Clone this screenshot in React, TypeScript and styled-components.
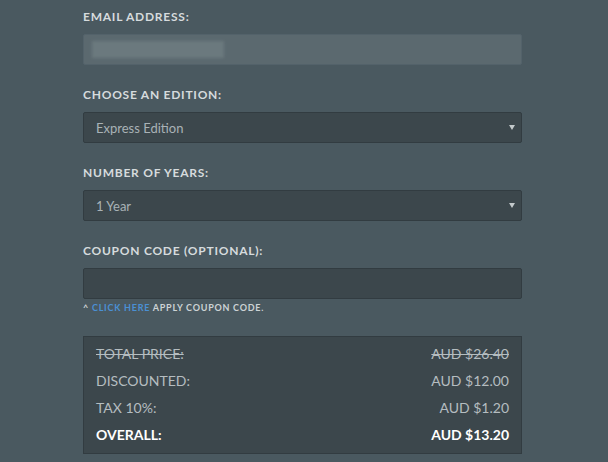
import React from "react";
import styled, { createGlobalStyle } from "styled-components";

const Global = createGlobalStyle`
  html, body { margin: 0; padding: 0; }
  body {
    background: #4a5960;
    font-family: Lato, "Open Sans", sans-serif;
    width: 608px;
    height: 462px;
    overflow: hidden;
  }
`;

const Form = styled.div`
  display: flex;
  flex-direction: column;
  width: 439px;
  padding: 9px 0 0 83px;
`;

const Field = styled.div`
  display: flex;
  flex-direction: column;
  gap: 9px;
  margin-bottom: 22px;
`;

const Label = styled.div`
  font-size: 12px;
  line-height: 16px;
  font-weight: 700;
  letter-spacing: 0.75px;
  text-transform: uppercase;
  color: #d6dbdd;
`;

const Box = styled.div<{ $variant: "light" | "dark" }>`
  box-sizing: border-box;
  height: 31px;
  border-radius: 2px;
  border: 1px solid ${(p) => (p.$variant === "light" ? "#53626a" : "#323c41")};
  background: ${(p) => (p.$variant === "light" ? "#5b696f" : "#3c474c")};
  display: flex;
  align-items: center;
  padding: 0 6px 0 12px;
  color: #a9b2b6;
  font-size: 13px;
`;

const Blurred = styled.div`
  width: 132px;
  height: 17px;
  margin-left: -4px;
  background: #6b797e;
  filter: blur(1.5px);
`;

const Value = styled.span`
  flex: 1;
`;

const Caret = styled.span`
  width: 0;
  height: 0;
  border-left: 3px solid transparent;
  border-right: 3px solid transparent;
  border-top: 5px solid #c3c9cb;
`;

const Hint = styled.div`
  margin-top: -19px;
  margin-bottom: 22px;
  font-size: 9px;
  line-height: 12px;
  font-weight: 700;
  letter-spacing: 0.75px;
  color: #cdd3d5;
`;

const Link = styled.span`
  color: #4a90d4;
`;

const Summary = styled.div`
  box-sizing: border-box;
  height: 118px;
  border: 1px solid #323c41;
  background: #3c474c;
  padding: 3px 12px 5px 12px;
  display: flex;
  flex-direction: column;
`;

const Row = styled.div<{ $strike?: boolean; $bold?: boolean }>`
  display: flex;
  justify-content: space-between;
  align-items: center;
  height: 27px;
  font-size: 14px;
  text-transform: uppercase;
  color: ${(p) => (p.$bold ? "#ffffff" : "#b5bdc0")};
  font-weight: ${(p) => (p.$bold ? 700 : 400)};
  text-decoration: ${(p) => (p.$strike ? "line-through" : "none")};
`;

export default function App() {
  return (
    <>
      <Global />
      <Form>
        <Field>
          <Label>Email Address:</Label>
          <Box $variant="light">
            <Blurred />
          </Box>
        </Field>
        <Field>
          <Label>Choose an Edition:</Label>
          <Box $variant="dark">
            <Value>Express Edition</Value>
            <Caret />
          </Box>
        </Field>
        <Field>
          <Label>Number of Years:</Label>
          <Box $variant="dark">
            <Value>1 Year</Value>
            <Caret />
          </Box>
        </Field>
        <Field>
          <Label>Coupon Code (Optional):</Label>
          <Box $variant="dark" />
        </Field>
        <Hint>
          ^ <Link>CLICK HERE</Link> APPLY COUPON CODE.
        </Hint>
        <Summary>
          <Row $strike>
            <span>Total Price:</span>
            <span>AUD $26.40</span>
          </Row>
          <Row>
            <span>Discounted:</span>
            <span>AUD $12.00</span>
          </Row>
          <Row>
            <span>Tax 10%:</span>
            <span>AUD $1.20</span>
          </Row>
          <Row $bold>
            <span>Overall:</span>
            <span>AUD $13.20</span>
          </Row>
        </Summary>
      </Form>
    </>
  );
}
